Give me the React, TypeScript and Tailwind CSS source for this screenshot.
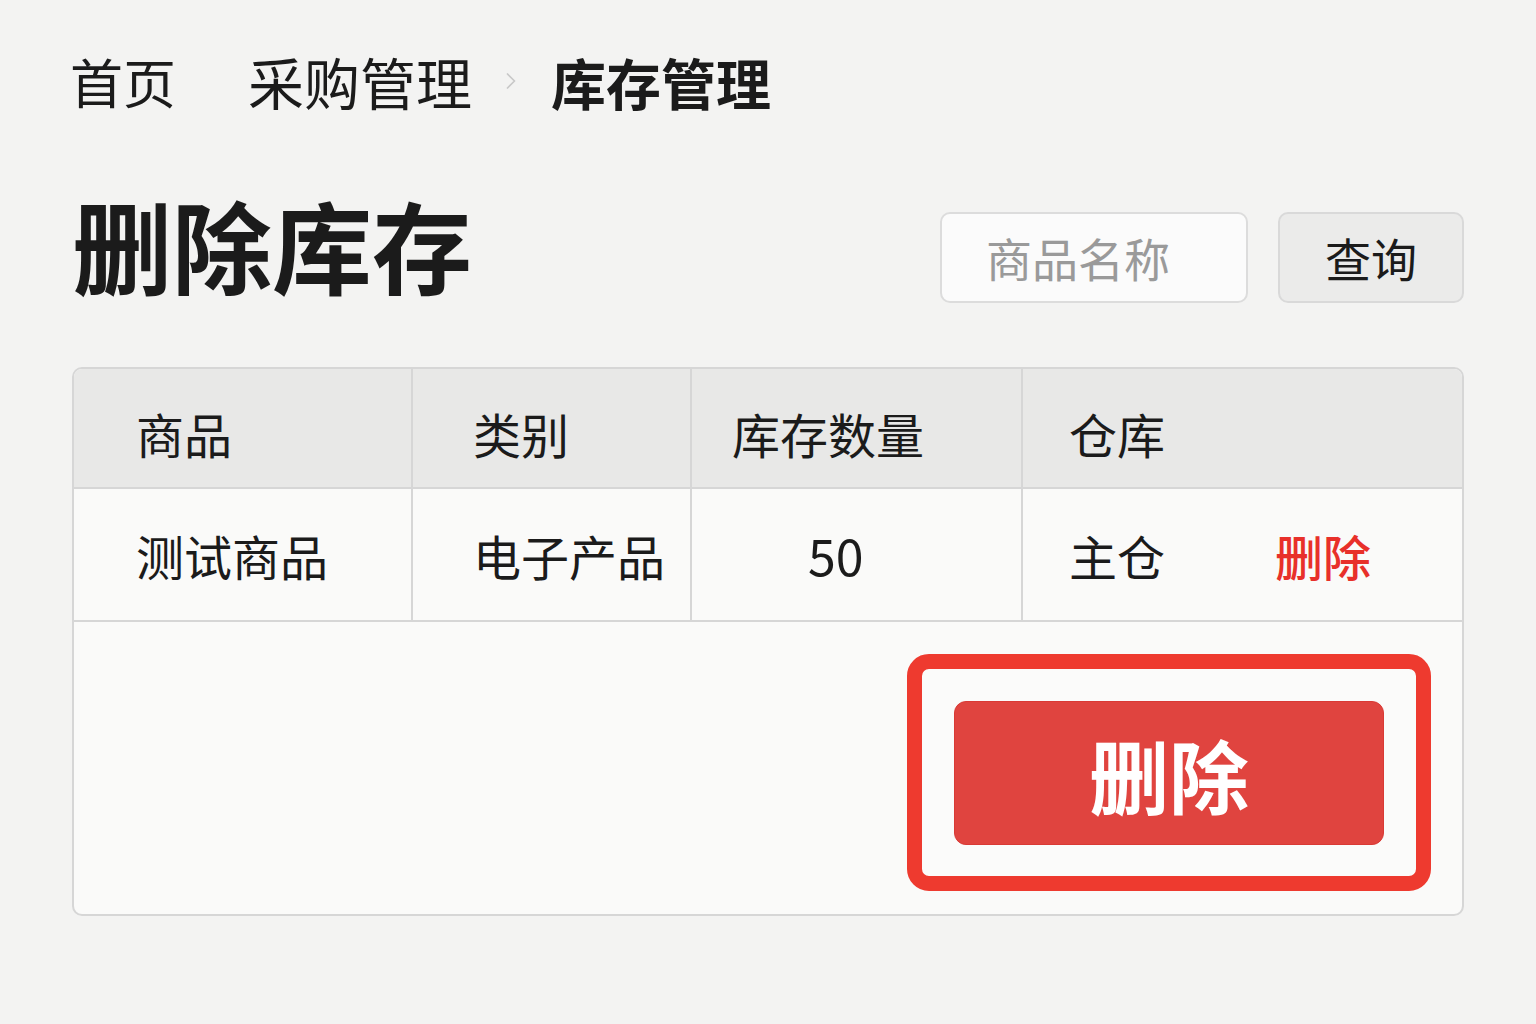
import { ChevronRight } from "lucide-react";

const font = { fontFamily: '"Noto Sans CJK SC", "Noto Sans", sans-serif' };

export default function App() {
  return (
    <div
      className="min-h-screen w-full bg-[#f3f3f2] px-[72px] pt-[48px] text-[#1b1b1b]"
      style={font}
    >
      {/* breadcrumb */}
      <nav className="flex h-[66px] items-center leading-none">
        <span className="-ml-[2px] text-[53px]">首页</span>
        <span className="ml-[72px] text-[56px]">采购管理</span>
        <ChevronRight className="ml-[25px] mr-[26px] h-[28px] w-[28px] text-[#c8c8c8]" strokeWidth={1.5} />
        <span className="text-[55px] font-bold">库存管理</span>
      </nav>

      {/* title + search */}
      <div className="mt-[86px] flex items-start justify-between">
        <h1 className="-mt-[8px] text-[100px] font-bold leading-[104px]">删除库存</h1>
        <div className="mt-[12px] flex gap-[30px]">
          <div className="flex h-[91px] w-[308px] items-center rounded-[10px] border-2 border-[#dcdcdc] bg-[#fbfbfb] pl-[44px] text-[46px] text-[#9a9a9a]">
            商品名称
          </div>
          <button className="h-[91px] w-[186px] rounded-[10px] border-2 border-[#d9d9d9] bg-[#ebebea] text-[46px] text-[#1b1b1b]">
            查询
          </button>
        </div>
      </div>

      {/* table */}
      <div className="mt-[64px] overflow-hidden rounded-[10px] border-2 border-[#d6d6d6] bg-[#fafaf9]">
        <div className="grid grid-cols-[339px_279px_331px_1fr] text-[48px]">
          <div className="flex h-[120px] items-center border-b-2 border-r-2 border-[#d6d6d6] bg-[#e8e8e7] pl-[62px] pt-[10px]">商品</div>
          <div className="flex h-[120px] items-center border-b-2 border-r-2 border-[#d6d6d6] bg-[#e8e8e7] pl-[60px] pt-[10px]">类别</div>
          <div className="flex h-[120px] items-center border-b-2 border-r-2 border-[#d6d6d6] bg-[#e8e8e7] pl-[40px] pt-[10px]">库存数量</div>
          <div className="flex h-[120px] items-center border-b-2 border-[#d6d6d6] bg-[#e8e8e7] pl-[46px] pt-[10px]">仓库</div>

          <div className="flex h-[133px] items-center border-b-2 border-r-2 border-[#d6d6d6] pl-[62px]">测试商品</div>
          <div className="flex h-[133px] items-center border-b-2 border-r-2 border-[#d6d6d6] pl-[60px]">电子产品</div>
          <div className="flex h-[133px] items-center border-b-2 border-r-2 border-[#d6d6d6] pl-[116px] text-[50px]">50</div>
          <div className="flex h-[133px] items-center border-b-2 border-[#d6d6d6] pl-[46px]">
            <span>主仓</span>
            <span className="ml-[110px] font-medium text-[#e8302a]">删除</span>
          </div>
        </div>

        <div className="flex h-[292px] justify-end pr-[31px] pt-[32px]">
          <div className="h-[237px] w-[524px] rounded-[22px] border-[15px] border-[#ee3a2f] bg-[#fbfbfa] p-[32px]">
            <button className="flex h-[144px] w-full items-center justify-center rounded-[12px] border border-[#d93a35] bg-[#e0443f] text-[80px] font-bold leading-none text-white">
              删除
            </button>
          </div>
        </div>
      </div>
    </div>
  );
}
